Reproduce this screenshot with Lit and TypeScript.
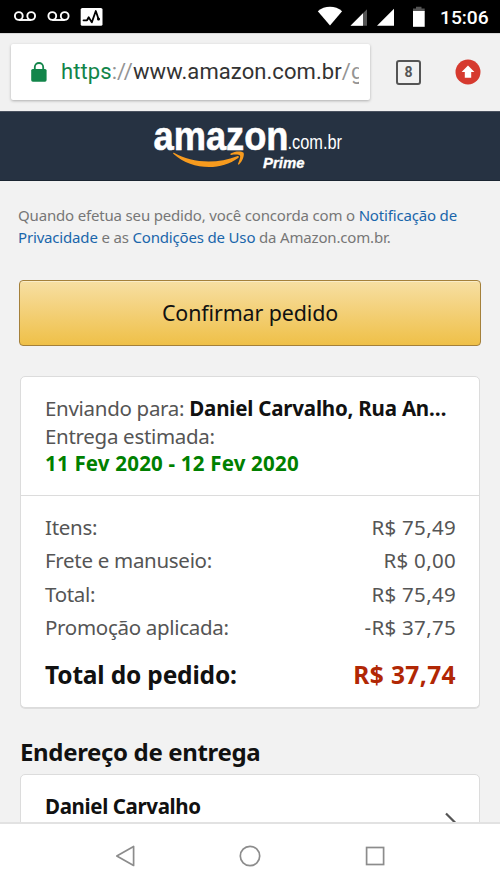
import { LitElement, html, css } from "lit";
import { customElement } from "lit/decorators.js";

@customElement("status-bar")
class StatusBar extends LitElement {
  static styles = css`
    :host { display: flex; align-items: center; height: 33px; background: #000; color: #fff; box-sizing: border-box; flex: none; }
    svg { display: block; }
    .time { font: 500 19.2px/33px Roboto, sans-serif; width: 62px; padding: 2px 0 0 2px; box-sizing: border-box; }
    .icons { flex: 1; }
  `;
  render() {
    return html`
      <svg class="icons" width="438" height="33" viewBox="0 0 438 33" fill="none">
        <g stroke="#fff" stroke-width="1.9">
          <circle cx="18.8" cy="16" r="3.9" /><circle cx="31.2" cy="16" r="3.9" /><path d="M18.8 20H31.2" />
          <circle cx="52.3" cy="16" r="3.9" /><circle cx="64.7" cy="16" r="3.9" /><path d="M52.3 20H64.7" />
        </g>
        <rect x="80.7" y="8" width="21.8" height="17.8" rx="1.6" fill="#fff" />
        <path d="M83.5 20.3H87L88.7 17.3L91.8 22.4L95.8 11L98.6 19.2" stroke="#000" stroke-width="1.8" stroke-linejoin="round" stroke-linecap="round" />
        <circle cx="98.5" cy="19" r="1.5" fill="#000" />
        <path d="M317.8 11.2C324.5 5.3 335.5 5.3 342.1 11.2L330 25.6Z" fill="#fff" />
        <path d="M367 9.2V25.7H350.5Z" fill="#555" />
        <path d="M363 13.2V25.7H350.5Z" fill="#fff" />
        <path d="M394 8.8V25.7H377Z" fill="#fff" />
        <path d="M416 6.7H421.5V8.6H424.7V11.5H413V8.6H416Z" fill="#555" />
        <path d="M413 11H424.7V26.8H413Z" fill="#fff" />
      </svg>
      <span class="time">15:06</span>
    `;
  }
}

@customElement("browser-bar")
class BrowserBar extends LitElement {
  static styles = css`
    :host { display: flex; align-items: center; height: 78px; background: #f1f1f1; padding: 0 19px 0 11px; box-sizing: border-box; flex: none; border-top: 1px solid #d8d8d8; }
    .field { width: 359px; height: 56px; background: #fff; border-radius: 2px; box-shadow: 0 1px 3px rgba(0,0,0,.28); display: flex; align-items: center; box-sizing: border-box; padding: 0 11px 0 20px; margin-bottom: 1px; }
    .url { margin-left: 14px; flex: 1; overflow: hidden; white-space: nowrap; font: 22px/30px Roboto, sans-serif; letter-spacing: .08px; color: #333; }
    .secure { color: #12854a; }
    .dim { color: #949494; }
    .tabs { margin-left: 26px; width: 25px; height: 25px; box-sizing: border-box; border: 2px solid #555; border-radius: 3px; display: flex; align-items: center; justify-content: center; font: 700 14px/20px "Roboto", sans-serif; color: #555; margin-top: -1px; }
    .update { margin-left: auto; display: block; margin-top: -1px; }
  `;
  render() {
    return html`
      <div class="field">
        <svg width="16" height="20" viewBox="0 0 16 20">
          <path d="M3.8 8V5.2a4.2 4.2 0 0 1 8.4 0V8" fill="none" stroke="#12854a" stroke-width="1.8" />
          <rect x="0.2" y="6.9" width="15.4" height="12.8" rx="1.6" fill="#12854a" />
        </svg>
        <div class="url"><span class="secure">https</span><span class="dim">://</span>www.amazon.com.br<span class="dim">/g</span></div>
      </div>
      <div class="tabs">8</div>
      <svg class="update" width="26" height="26" viewBox="0 0 26 26">
        <circle cx="13" cy="13" r="12.5" fill="#d63a2f" />
        <path d="M13 6.6L19.4 13H16.2V18.8H9.8V13H6.6Z" fill="#fff" />
      </svg>
    `;
  }
}

@customElement("store-header")
class StoreHeader extends LitElement {
  static styles = css`
    :host { display: flex; justify-content: center; height: 70px; background: #263242; box-sizing: border-box; border-top: 1px solid #4a5260; border-bottom: 1px solid #1b2532; flex: none; }
    svg { display: block; }
    .name { font: 700 41px "Liberation Sans", sans-serif; }
    .domain { font: 400 19.5px "Liberation Sans", sans-serif; }
    .prime { font: italic 700 14px "Liberation Sans", sans-serif; }
  `;
  render() {
    return html`
      <svg width="200" height="68" viewBox="150 112 200 68" fill="#fff">
        <text class="name" x="153.5" y="149.5" textLength="135" lengthAdjust="spacingAndGlyphs" stroke="#fff" stroke-width=".6">amazon</text>
        <text class="domain" x="287.5" y="148.8" textLength="54.5" lengthAdjust="spacingAndGlyphs">.com.br</text>
        <text class="prime" x="263" y="168" textLength="41.5" lengthAdjust="spacingAndGlyphs" stroke="#fff" stroke-width=".3">Prime</text>
        <path d="M174 152.8C191 163 217 164.3 237 156.2C238.7 155.5 239.7 157 238.2 158.1C220 171.5 191 169.8 173.6 154.1C172.8 153.2 173.2 152.3 174 152.8Z" fill="#f79b1e" />
        <path d="M230.8 153.6C234.8 150.9 241.8 151 243.4 152.6C244.8 154.6 242.8 161.3 239 164.4C238.3 164.9 237.7 164.5 238 163.8C239.2 160.9 240.8 156.7 239.9 155.4C239 154.3 234.2 154.6 231.2 154.9C230.3 155 230 154.2 230.8 153.6Z" fill="#f79b1e" />
      </svg>
    `;
  }
}

@customElement("nav-bar")
class NavBar extends LitElement {
  static styles = css`
    :host { display: flex; align-items: center; justify-content: center; gap: 101px; height: 67px; padding-bottom: 2px; box-sizing: border-box; background: #fff; border-top: 2px solid #e2e2e2; flex: none; }
    svg { display: block; }
  `;
  render() {
    return html`
      <svg width="24" height="24" viewBox="0 0 24 24" fill="none" stroke="#8c8c8c" stroke-width="1.7"><path d="M20.6 2.4V21.4L3.8 11.9Z" stroke-linejoin="round" /></svg>
      <svg width="24" height="24" viewBox="0 0 24 24" fill="none" stroke="#8c8c8c" stroke-width="1.7"><circle cx="12" cy="12" r="9.7" /></svg>
      <svg width="24" height="24" viewBox="0 0 24 24" fill="none" stroke="#8c8c8c" stroke-width="1.7"><rect x="3.6" y="3.5" width="17" height="17" /></svg>
    `;
  }
}

@customElement("app-root")
class AppRoot extends LitElement {
  static styles = css`
    :host { display: flex; flex-direction: column; height: 889px; width: 500px; overflow: hidden; font-family: "Noto Sans", "Open Sans", sans-serif; background: #f2f2f2; color: #111; }
    main { flex: 1; min-height: 0; overflow: hidden; padding: 23px 20px 0; }
    .legal { margin: 0 -10px 0 -2px; font-size: 15px; line-height: 22px; letter-spacing: -.17px; color: #777; white-space: nowrap; }
    .link { color: #1a66ab; }
    .confirm { display: block; width: 462px; height: 66px; margin: 32px -1px 0; padding: 0; border: 1px solid #a4803a; border-radius: 4px; background: linear-gradient(#f7dfa3, #efc048); box-shadow: inset 0 1px 0 rgba(255,255,255,.4); font: 21.4px/64px "Noto Sans", sans-serif; letter-spacing: -.1px; color: #111; text-align: center; }
    .card { background: #fff; border: 1px solid #dcdcdc; border-radius: 5px; box-sizing: border-box; box-shadow: 0 1px 0 #dedede; }
    .summary { margin-top: 30px; height: 332px; }
    .shipping { height: 119px; box-sizing: border-box; padding: 18px 20px 0 24px; border-bottom: 1px solid #dcdcdc; font-size: 20.5px; line-height: 27.7px; letter-spacing: -.3px; color: #555; white-space: nowrap; }
    .strong { font-weight: 700; color: #111; letter-spacing: -.2px; }
    .address .strong { letter-spacing: -.37px; }
    .date { font-weight: 700; color: #008000; letter-spacing: .2px; }
    .totals { padding: 15px 23px 0 24px; font-size: 20.5px; line-height: 33.4px; color: #555; letter-spacing: -.3px; }
    .row { display: flex; justify-content: space-between; }
    .value { letter-spacing: .3px; }
    .grand { font-size: 24.5px; font-weight: 700; color: #111; margin-top: 13px; letter-spacing: -.17px; }
    .price { color: #b12704; letter-spacing: .4px; }
    h2 { margin: 27px 0 6px; font-size: 24px; line-height: 33px; letter-spacing: -.35px; font-weight: 700; }
    .address { height: 120px; padding: 17px 21px 0 24px; display: flex; justify-content: space-between; font-size: 20.5px; line-height: 28px; }
    .chevron { display: block; margin-top: 20px; }
  `;
  private rows = [
    ["Itens:", "R$ 75,49"],
    ["Frete e manuseio:", "R$ 0,00"],
    ["Total:", "R$ 75,49"],
    ["Promoção aplicada:", "-R$ 37,75"],
  ];
  render() {
    return html`
      <status-bar></status-bar>
      <browser-bar></browser-bar>
      <store-header></store-header>
      <main>
        <div class="legal">Quando efetua seu pedido, você concorda com o <span class="link">Notificação de<br />Privacidade</span> e as <span class="link">Condições de Uso</span> da Amazon.com.br.</div>
        <button class="confirm">Confirmar pedido</button>
        <section class="card summary">
          <div class="shipping">
            <div>Enviando para: <span class="strong">Daniel Carvalho, Rua An…</span></div>
            <div>Entrega estimada:</div>
            <div class="date">11 Fev 2020 - 12 Fev 2020</div>
          </div>
          <div class="totals">
            ${this.rows.map(([label, value]) => html`<div class="row"><span>${label}</span><span class="value">${value}</span></div>`)}
            <div class="row grand"><span>Total do pedido:</span><span class="price">R$ 37,74</span></div>
          </div>
        </section>
        <h2>Endereço de entrega</h2>
        <section class="card address">
          <span class="strong">Daniel Carvalho</span>
          <svg class="chevron" width="14" height="24" viewBox="0 0 14 24" fill="none" stroke="#555" stroke-width="2.2"><path d="M2 1.5L12 11.5L2 21.5" /></svg>
        </section>
      </main>
      <nav-bar></nav-bar>
    `;
  }
}
